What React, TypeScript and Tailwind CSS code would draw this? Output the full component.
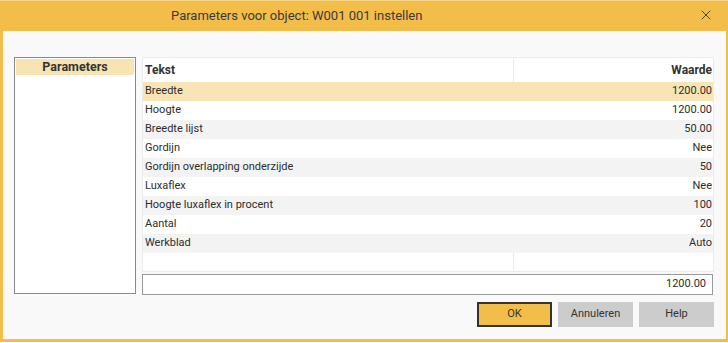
import { X } from 'lucide-react';

interface ParamRow {
  name: string;
  value: string;
}

const rows: ParamRow[] = [
  { name: 'Breedte', value: '1200.00' },
  { name: 'Hoogte', value: '1200.00' },
  { name: 'Breedte lijst', value: '50.00' },
  { name: 'Gordijn', value: 'Nee' },
  { name: 'Gordijn overlapping onderzijde', value: '50' },
  { name: 'Luxaflex', value: 'Nee' },
  { name: 'Hoogte luxaflex in procent', value: '100' },
  { name: 'Aantal', value: '20' },
  { name: 'Werkblad', value: 'Auto' },
];

export default function App() {
  return (
    <div
      className="w-[728px] h-[343px] bg-white text-[#2d2d2d]"
      style={{ fontFamily: 'Roboto, "Noto Sans", sans-serif' }}
    >
      <div className="h-[342px] w-[728px] flex flex-col bg-[#f3bd4a] pl-[3px] pr-[2px] pb-[3px] border-t border-[#f7d68c]">
        {/* title bar */}
        <div className="h-[30px] relative flex items-center shrink-0 pl-[168px]">
          <span className="text-[13px] text-[#3a3a3a]">
            Parameters voor object: W001 001 instellen
          </span>
          <X className="absolute right-[12px] top-[6px] w-[16px] h-[16px] text-[#333]" strokeWidth={1.3} />
        </div>

        {/* body */}
        <div className="flex-1 bg-[#f9f9f9] pt-[26px] pl-[11px] pr-[12px] flex flex-col">
          <div className="flex gap-[6px]">
            {/* left panel */}
            <div className="w-[122px] h-[237px] border border-[#878a8d] bg-white p-px shrink-0">
              <div className="h-[16px] bg-[#f8e3b2] text-center text-[12.5px] font-bold leading-[16px] text-[#333]">
                Parameters
              </div>
            </div>

            {/* right side */}
            <div className="flex-1 flex flex-col">
              <div className="h-[215px] border border-[#ebebeb] bg-white flex flex-col text-[11px]">
                <div className="flex h-[24px] shrink-0 font-bold text-[12px] text-[#333]">
                  <div className="w-[371px] border-r border-[#ebebeb] pl-[2px] flex items-center">
                    Tekst
                  </div>
                  <div className="flex-1 flex items-center justify-end pr-px">Waarde</div>
                </div>
                {rows.map((row, i) => (
                  <div
                    key={row.name}
                    className={
                      'flex h-[19px] shrink-0 items-center ' +
                      (i === 0 ? 'bg-[#f9e4b5]' : i % 2 === 0 ? 'bg-[#f3f3f3]' : 'bg-white')
                    }
                  >
                    <div className="w-[371px] pl-[2px]">{row.name}</div>
                    <div className="flex-1 text-right pr-px">{row.value}</div>
                  </div>
                ))}
                <div className="flex flex-1">
                  <div className="w-[371px] border-r border-[#e4ecf7]" />
                </div>
              </div>
              <div className="mt-[2px] h-[21px] border border-[#9a9a9a] bg-white flex items-center justify-end pr-[6px] text-[11px] mr-px">
                1200.00
              </div>
            </div>
          </div>

          {/* buttons */}
          <div className="flex justify-end gap-[6px] mt-[7px] text-[11px] pr-0">
            <button className="w-[75px] h-[25px] bg-[#f3bd4a] border-2 border-[#333] text-[#333]">OK</button>
            <button className="w-[75px] h-[25px] bg-[#cccccc] text-[#333]">Annuleren</button>
            <button className="w-[75px] h-[25px] bg-[#cccccc] text-[#333]">Help</button>
          </div>
        </div>
      </div>
    </div>
  );
}
